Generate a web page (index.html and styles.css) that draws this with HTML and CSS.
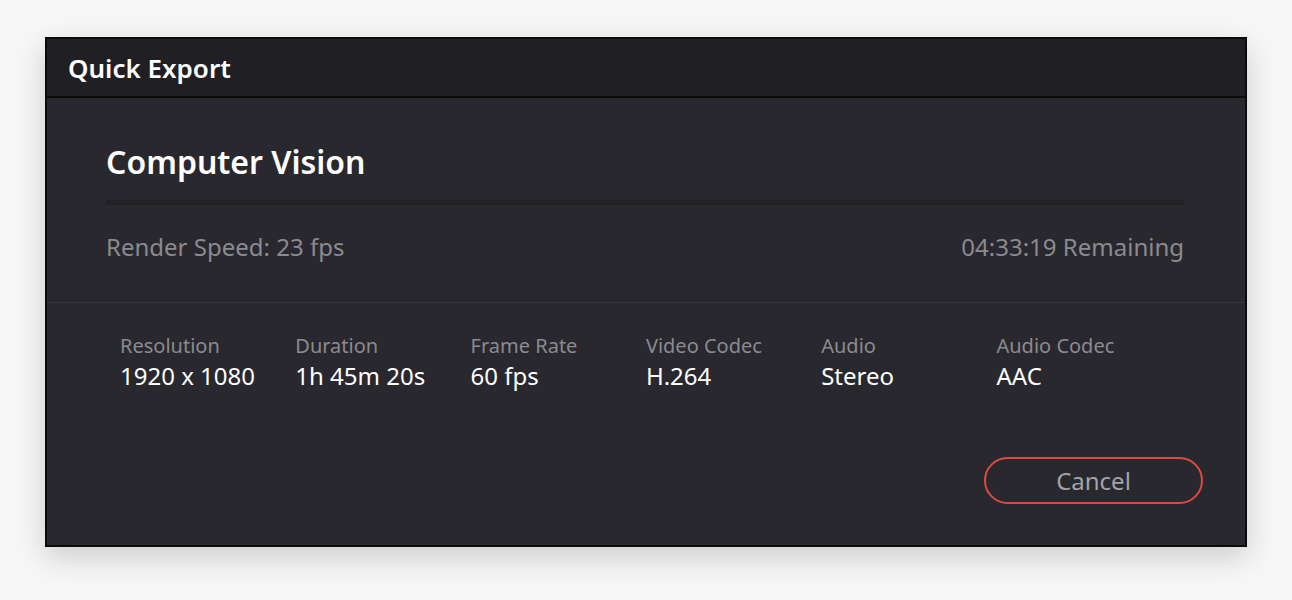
FILE: index.html
```html
<!DOCTYPE html>
<html lang="en">
<head>
<meta charset="utf-8">
<title>Quick Export</title>
<link rel="stylesheet" href="styles.css">
</head>
<body>
<div class="dialog">
  <div class="header">Quick Export</div>
  <div class="progress-section">
    <h1 class="job-title">Computer Vision</h1>
    <div class="track"></div>
    <div class="status">
      <span>Render Speed: 23 fps</span>
      <span>04:33:19 Remaining</span>
    </div>
  </div>
  <div class="details">
    <div class="field"><div class="label">Resolution</div><div class="value">1920 x 1080</div></div>
    <div class="field"><div class="label">Duration</div><div class="value">1h 45m 20s</div></div>
    <div class="field"><div class="label">Frame Rate</div><div class="value">60 fps</div></div>
    <div class="field"><div class="label">Video Codec</div><div class="value">H.264</div></div>
    <div class="field"><div class="label">Audio</div><div class="value">Stereo</div></div>
    <div class="field"><div class="label">Audio Codec</div><div class="value">AAC</div></div>
  </div>
  <div class="actions">
    <button class="cancel">Cancel</button>
  </div>
</div>
</body>
</html>
```
FILE: styles.css
```css
html, body {
  margin: 0;
  padding: 0;
}
body {
  background: #f7f7f7;
  font-family: "Noto Sans", "Open Sans", sans-serif;
  padding: 37px 45px 0;
  height: 600px;
  box-sizing: border-box;
}
.dialog {
  border: 2px solid #0b0b0c;
  background: #28282e;
  height: 510px;
  box-sizing: border-box;
  box-shadow: 0 10px 30px rgba(0,0,0,0.18);
  display: flex;
  flex-direction: column;
}
.header {
  background: #1f1f24;
  height: 57px;
  border-bottom: 2px solid #0b0b0c;
  box-sizing: content-box;
  display: flex;
  align-items: center;
  padding-left: 21px;
  color: #ffffff;
  font-weight: 600;
  font-size: 26px;
}
.progress-section {
  padding: 0 61px 0 59px;
  border-bottom: 1px solid #35353b;
  height: 205px;
  box-sizing: border-box;
}
.job-title {
  margin: 0;
  padding-top: 42px;
  font-size: 32px;
  font-weight: 600;
  color: #ffffff;
  line-height: 44px;
}
.track {
  margin-top: 16px;
  height: 5px;
  background: #222226;
}
.status {
  display: flex;
  justify-content: space-between;
  margin-top: 26px;
  color: #8b8b8f;
  font-size: 24px;
  line-height: 32px;
}
.details {
  display: grid;
  grid-template-columns: repeat(6, 175.3px);
  padding: 29px 0 0 73px;
}
.label {
  color: #8b8b8f;
  font-size: 20px;
  line-height: 28px;
}
.value {
  color: #ffffff;
  font-size: 24px;
  line-height: 32px;
}
.actions {
  display: flex;
  justify-content: flex-end;
  padding: 65px 42px 0 0;
}
.cancel {
  width: 219px;
  height: 47px;
  border: 2px solid #df4a3e;
  border-radius: 24px;
  background: transparent;
  color: #a3a3a6;
  font-family: "Noto Sans", "Open Sans", sans-serif;
  font-size: 24px;
  padding: 0;
  cursor: pointer;
}
```
